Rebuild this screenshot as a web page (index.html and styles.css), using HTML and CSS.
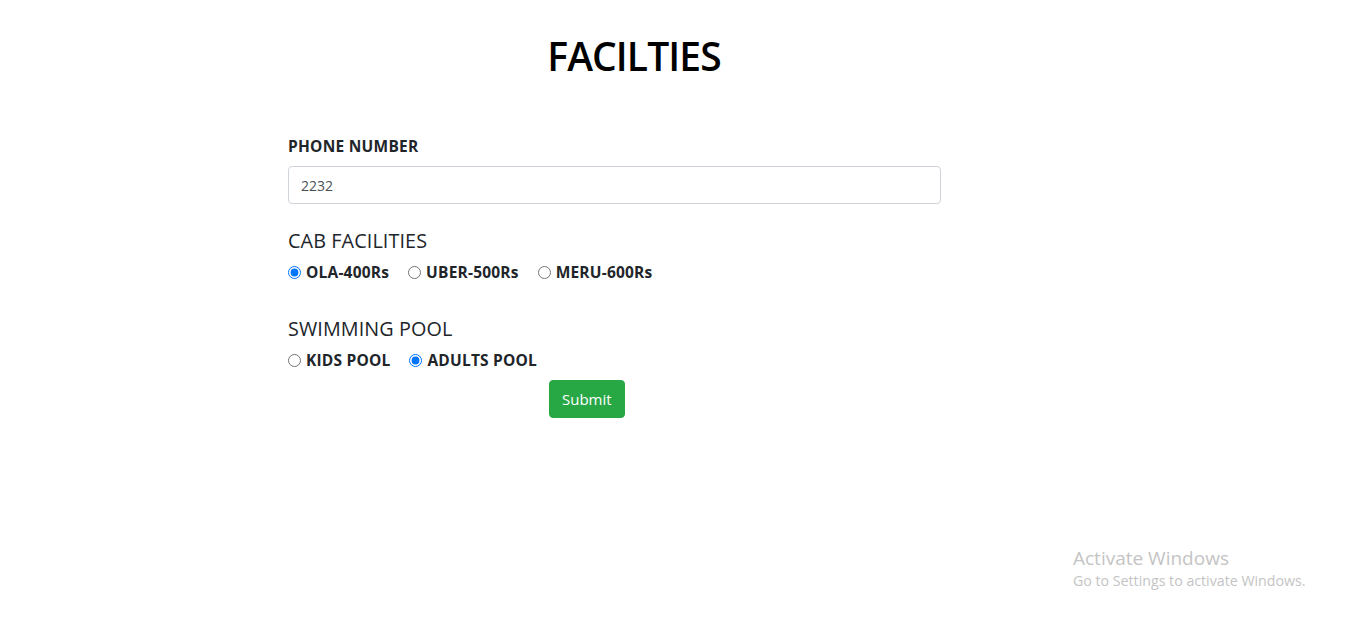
FILE: index.html
```html
<!DOCTYPE html>
<html lang="en">
<head>
<meta charset="utf-8">
<title>Facilities</title>
<link rel="stylesheet" href="styles.css">
</head>
<body>
<div class="page">
  <h1 class="title">FACILTIES</h1>
  <form class="form">
    <label class="field-label" for="phone">PHONE NUMBER</label>
    <input class="text-input" id="phone" type="text" value="2232">

    <h5 class="section-title">CAB FACILITIES</h5>
    <div class="radio-row">
      <label class="radio-item"><input type="radio" name="cab" checked><span>OLA-400Rs</span></label>
      <label class="radio-item"><input type="radio" name="cab"><span>UBER-500Rs</span></label>
      <label class="radio-item"><input type="radio" name="cab"><span>MERU-600Rs</span></label>
    </div>

    <h5 class="section-title pool">SWIMMING POOL</h5>
    <div class="radio-row">
      <label class="radio-item"><input type="radio" name="pool"><span>KIDS POOL</span></label>
      <label class="radio-item"><input type="radio" name="pool" checked><span>ADULTS POOL</span></label>
    </div>

    <div class="actions">
      <button type="button" class="btn-submit">Submit</button>
    </div>
  </form>
</div>
<div class="watermark">
  <div class="wm-title">Activate Windows</div>
  <div class="wm-sub">Go to Settings to activate Windows.</div>
</div>
</body>
</html>
```

FILE: styles.css
```css
html, body {
  margin: 0;
  padding: 0;
  background: #fff;
}

body {
  font-family: "Open Sans", "Noto Sans", sans-serif;
  color: #212529;
  font-size: 16px;
  line-height: 24px;
}

.page {
  padding-top: 32px;
}

.title {
  margin: 0;
  font-size: 39px;
  line-height: 48px;
  font-weight: 600;
  color: #000;
  text-align: center;
  padding-right: 98px;
  letter-spacing: -0.9px;
}

.form {
  width: 653px;
  margin: 54px 0 0 288px;
  display: flex;
  flex-direction: column;
}

.field-label {
  font-weight: 700;
  font-size: 15.5px;
  letter-spacing: 0.25px;
  margin-bottom: 8px;
}

.text-input {
  box-sizing: border-box;
  height: 38px;
  width: 100%;
  border: 1px solid #ced4da;
  border-radius: 4px;
  padding: 6px 12px;
  font-family: inherit;
  font-size: 14px;
  color: #495057;
  outline: none;
}

.section-title {
  margin: 25px 0 7px;
  font-size: 19.8px;
  line-height: 24px;
  font-weight: 400;
  color: #212529;
  letter-spacing: 0.1px;
}

.section-title.pool {
  margin-top: 33px;
}

.radio-row {
  display: flex;
  align-items: center;
}

.radio-item {
  display: flex;
  align-items: center;
  font-weight: 700;
  font-size: 15.5px;
  letter-spacing: 0.2px;
  margin-right: 19px;
}

.radio-item input {
  margin: 0 5px 0 0;
  width: 13px;
  height: 13px;
}

.actions {
  margin-top: 8px;
  padding-left: 261px;
}

.btn-submit {
  height: 38px;
  padding: 0 12px;
  border: 1px solid #28a745;
  border-radius: 4px;
  background: #28a745;
  color: #fff;
  font-family: inherit;
  font-size: 15px;
}

.watermark {
  position: absolute;
  left: 1073px;
  top: 545px;
  color: #c4c4c4;
}

.wm-title {
  font-size: 19px;
  line-height: 26px;
}

.wm-sub {
  font-size: 14.2px;
  line-height: 20px;
}
```
